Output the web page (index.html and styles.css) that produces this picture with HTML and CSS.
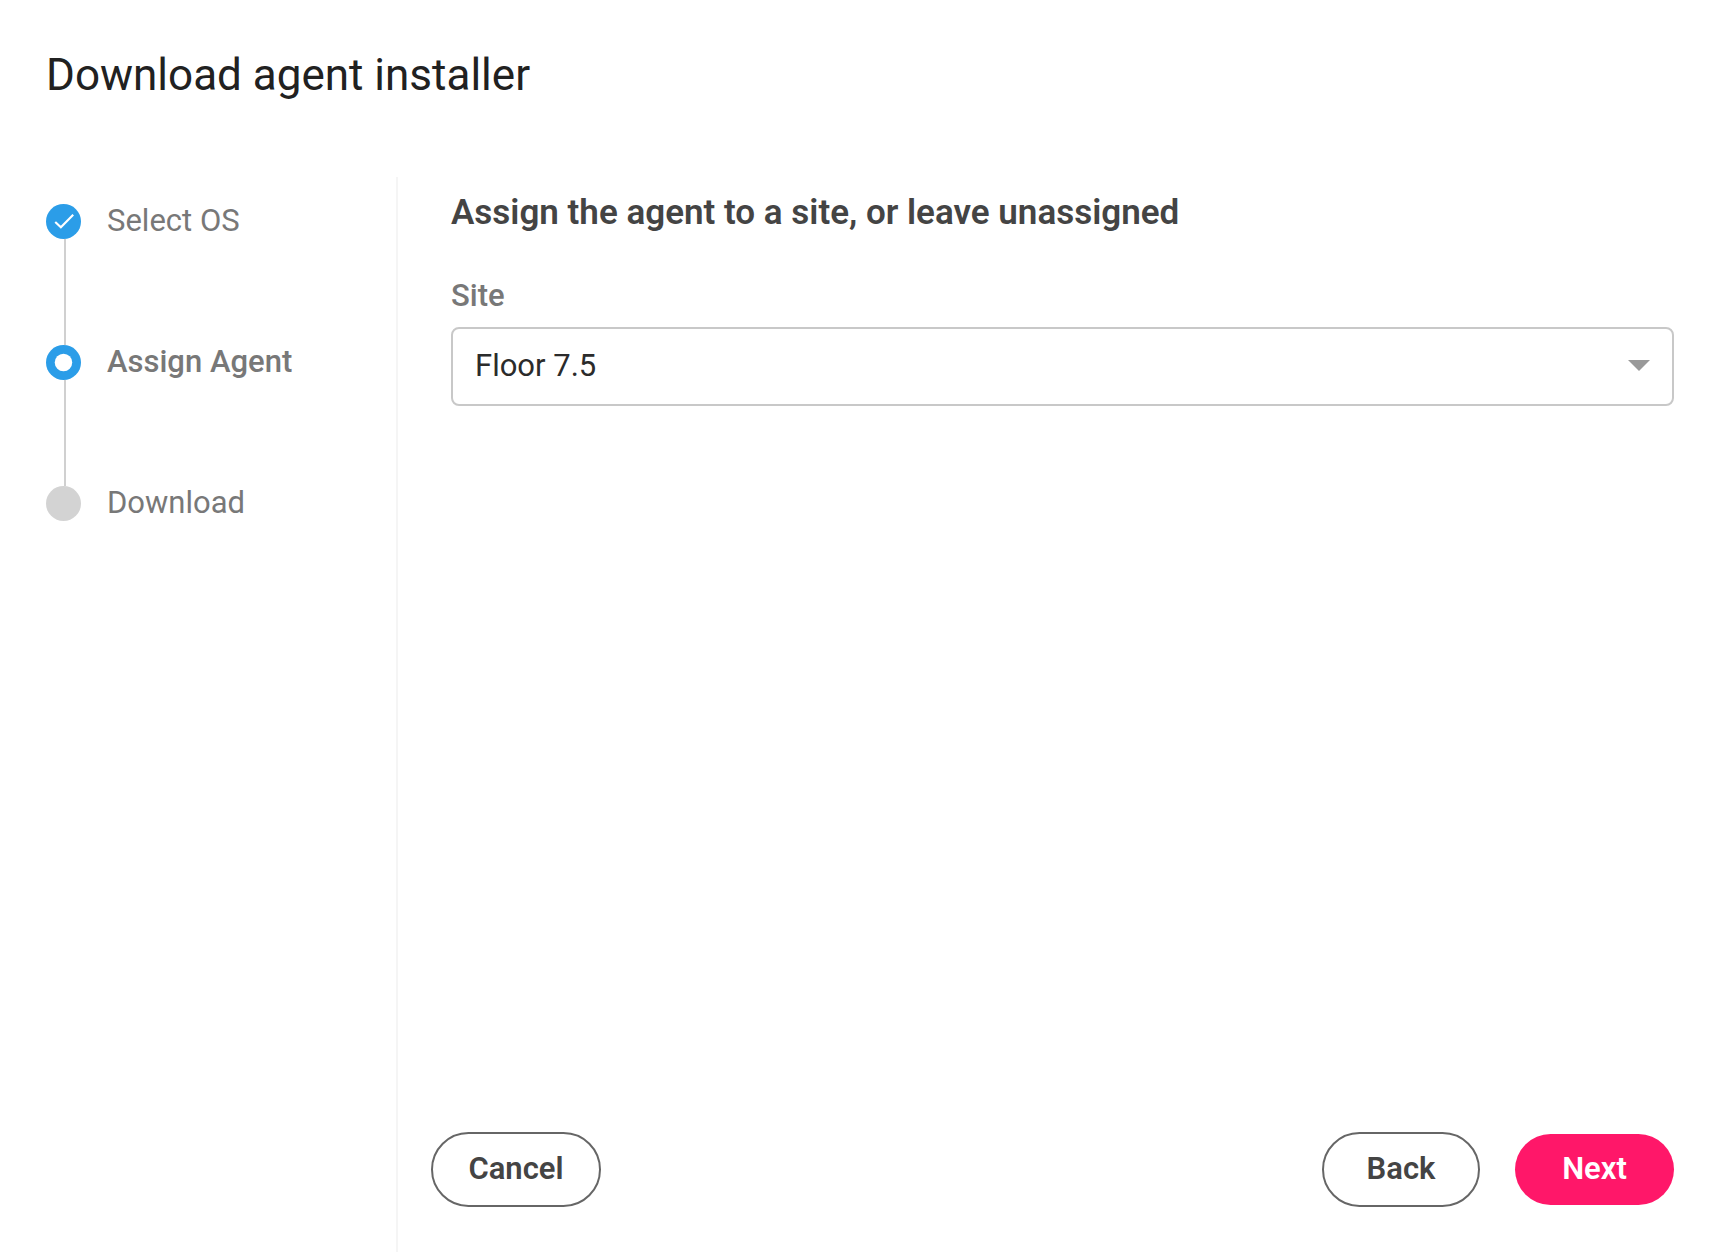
FILE: index.html
```html
<!DOCTYPE html>
<html lang="en">
<head>
  <meta charset="utf-8">
  <meta name="viewport" content="width=device-width, initial-scale=1">
  <title>Download agent installer</title>
  <link rel="stylesheet" href="styles.css">
</head>
<body class="page">
  <header class="page-header">
    <h1 class="page-title">Download agent installer</h1>
  </header>
  <div class="wizard">
    <nav class="sidebar" aria-label="Progress">
      <ol class="steps">
        <li class="step">
          <span class="step-rail">
            <svg class="step-icon" viewBox="0 0 36 36" aria-hidden="true">
              <circle cx="18" cy="18" r="18" fill="#2b9de8"/>
              <path d="M9.5 18.5L15.3 24L28 11" fill="none" stroke="#fff" stroke-width="2.2"/>
            </svg>
            <span class="step-line"></span>
          </span>
          <span class="step-label">Select OS</span>
        </li>
        <li class="step" aria-current="step">
          <span class="step-rail">
            <svg class="step-icon" viewBox="0 0 36 36" aria-hidden="true">
              <circle cx="18" cy="18" r="18" fill="#2b9de8"/>
              <circle cx="18" cy="18" r="9" fill="#fff"/>
            </svg>
            <span class="step-line"></span>
          </span>
          <span class="step-label step-label-current">Assign Agent</span>
        </li>
        <li class="step">
          <span class="step-rail">
            <svg class="step-icon" viewBox="0 0 36 36" aria-hidden="true">
              <circle cx="18" cy="18" r="18" fill="#d3d3d3"/>
            </svg>
          </span>
          <span class="step-label">Download</span>
        </li>
      </ol>
    </nav>
    <main class="content">
      <form class="form">
        <div class="fields">
          <h2 class="form-title">Assign the agent to a site, or leave unassigned</h2>
          <label class="field-label" for="site">Site</label>
          <select class="select" id="site" name="site">
            <option>Floor 7.5</option>
          </select>
        </div>
        <div class="actions">
          <button class="button button-cancel" type="button">Cancel</button>
          <button class="button" type="button">Back</button>
          <button class="button button-primary" type="submit">Next</button>
        </div>
      </form>
    </main>
  </div>
</body>
</html>
```

FILE: styles.css
```css
* {
  box-sizing: border-box;
}

.page {
  display: flex;
  flex-direction: column;
  min-height: 100vh;
  margin: 0;
  background: #fff;
  color: #212121;
  font-family: Roboto, "Liberation Sans", sans-serif;
}

.page-header {
  padding: 47px 46px 74px;
}

.page-title {
  margin: 0;
  font-size: 44px;
  font-weight: 400;
  line-height: 56px;
}

.wizard {
  display: flex;
  flex: 1;
}

.sidebar {
  flex: 0 0 398px;
  padding: 27px 24px 27px 46px;
  border-right: 2px solid #f5f5f5;
}

.steps {
  margin: 0;
  padding: 0;
  list-style: none;
}

.step {
  display: flex;
  gap: 26px;
}

.step-rail {
  display: flex;
  flex-direction: column;
  width: 35px;
}

.step-icon {
  display: block;
  width: 35px;
  height: 35px;
}

.step-line {
  width: 2px;
  height: 106px;
  margin-left: 18px;
  background: #d0d0d0;
}

.step-label {
  color: #787878;
  font-size: 31px;
  line-height: 34px;
}

.step-label-current {
  font-weight: 500;
}

.content {
  display: flex;
  flex: 1;
  min-width: 0;
}

.form {
  display: flex;
  flex: 1;
  flex-direction: column;
  justify-content: space-between;
  min-width: 0;
  padding: 14px 44px 45px 33px;
}

.fields {
  display: flex;
  flex-direction: column;
  padding-left: 20px;
}

.form-title {
  margin: 0 0 41px;
  color: #444;
  font-size: 35px;
  font-weight: 600;
  line-height: 44px;
}

.field-label {
  margin-bottom: 11px;
  color: #787878;
  font-size: 31px;
  font-weight: 500;
  line-height: 40px;
}

.select {
  width: 100%;
  height: 79px;
  padding: 0 64px 3px 22px;
  appearance: none;
  border: 2px solid #c8c8c8;
  border-radius: 8px;
  background: #fff url("data:image/svg+xml,%3Csvg xmlns='http://www.w3.org/2000/svg' width='22' height='11'%3E%3Cpath d='M0 0h22L11 11z' fill='%23999'/%3E%3C/svg%3E") no-repeat right 22px top 31px;
  color: #2b2b2b;
  font: 400 31px Roboto, "Liberation Sans", sans-serif;
}

.actions {
  display: flex;
  align-items: center;
  gap: 35px;
}

.button {
  min-width: 158px;
  height: 75px;
  padding: 0 34px 3px;
  border: 2px solid #666;
  border-radius: 38px;
  background: #fff;
  color: #444;
  font: 600 31px Roboto, "Liberation Sans", sans-serif;
}

.button-cancel {
  min-width: 170px;
  margin-right: auto;
}

.button-primary {
  min-width: 159px;
  height: 71px;
  border: 0;
  background: #ff1769;
  color: #fff;
}
```
